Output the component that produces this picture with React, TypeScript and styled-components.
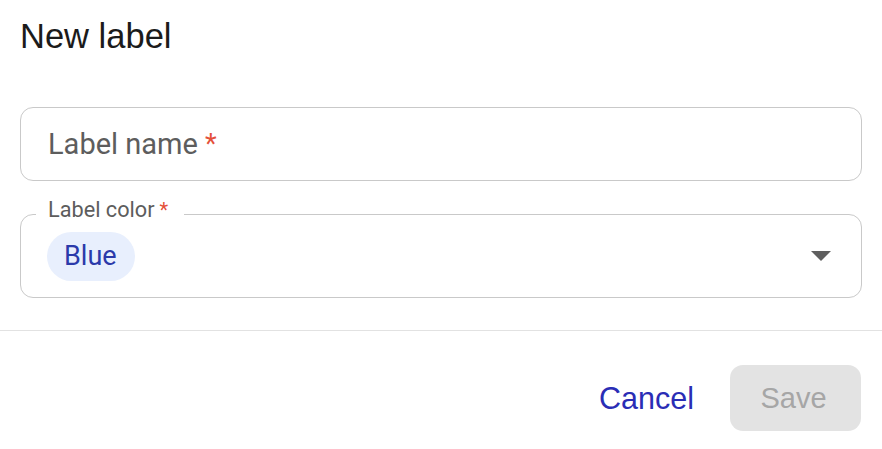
import React from "react";
import styled, { createGlobalStyle } from "styled-components";

const Global = createGlobalStyle`
  html, body { margin: 0; padding: 0; background: #ffffff; }
  body { font-family: "Liberation Sans", Arial, sans-serif; }
  * { box-sizing: border-box; }
`;

const Dialog = styled.div`
  width: 882px;
  height: 449px;
  display: flex;
  flex-direction: column;
  background: #ffffff;
`;

const Title = styled.h1`
  margin: 0;
  padding: 16px 20px 0;
  font-family: "Liberation Sans", Arial, sans-serif;
  font-weight: 400;
  font-size: 34.5px;
  line-height: 40px;
  color: #1b1b1b;
`;

const Body = styled.div`
  display: flex;
  flex-direction: column;
  gap: 33px;
  padding: 51px 20px 32px;
  border-bottom: 1px solid #e2e2e2;
`;

const TextField = styled.div`
  height: 74px;
  border: 1.5px solid #c9c9c9;
  border-radius: 13px;
  display: flex;
  align-items: center;
  padding: 0 27px;
  font-family: Roboto, "Noto Sans", sans-serif;
  font-size: 29px;
  color: #5d5d5d;
`;

const Required = styled.span<{ $small?: boolean }>`
  color: #e4503a;
  margin-left: ${(p) => (p.$small ? "5px" : "7px")};
  font-size: ${(p) => (p.$small ? "20px" : "27px")};
`;

const SelectField = styled.div`
  position: relative;
  height: 84px;
  border: 1.5px solid #c9c9c9;
  border-radius: 13px;
  padding: 0 30px 0 26px;
  display: flex;
  align-items: center;
  justify-content: space-between;
`;

const Legend = styled.span`
  position: absolute;
  top: -16px;
  left: 15px;
  padding: 0 16px 0 12px;
  background: #ffffff;
  font-family: Roboto, "Noto Sans", sans-serif;
  font-size: 21.7px;
  line-height: 22px;
  color: #5d5d5d;
`;

const Chip = styled.span`
  display: inline-flex;
  align-items: center;
  height: 49px;
  padding: 0 18px 0 17px;
  border-radius: 25px;
  background: #e8effd;
  color: #2b3aaa;
  font-family: Roboto, "Noto Sans", sans-serif;
  font-size: 27px;
`;

const Arrow = styled.svg`
  width: 20px;
  height: 10px;
`;

const Footer = styled.div`
  flex: 1;
  display: flex;
  justify-content: flex-end;
  align-items: flex-start;
  gap: 36px;
  padding: 34px 21px 0 0;
`;

const TextButton = styled.button`
  border: none;
  background: transparent;
  padding: 0;
  height: 66px;
  font-family: "Liberation Sans", Arial, sans-serif;
  font-size: 30.5px;
  color: #2a2db5;
  cursor: pointer;
`;

const FilledButton = styled.button`
  border: none;
  width: 131px;
  height: 66px;
  padding: 0 4px 0 0;
  border-radius: 13px;
  background: #e3e3e3;
  font-family: "Liberation Sans", Arial, sans-serif;
  font-size: 29px;
  color: #a6a6a6;
`;

export default function App() {
  return (
    <>
      <Global />
      <Dialog>
        <Title>New label</Title>
        <Body>
          <TextField>
            Label name<Required>*</Required>
          </TextField>
          <SelectField>
            <Legend>
              Label color<Required $small>*</Required>
            </Legend>
            <Chip>Blue</Chip>
            <Arrow viewBox="0 0 20 10">
              <path d="M0 0 L20 0 L10 10 Z" fill="#5f5f5f" />
            </Arrow>
          </SelectField>
        </Body>
        <Footer>
          <TextButton>Cancel</TextButton>
          <FilledButton disabled>Save</FilledButton>
        </Footer>
      </Dialog>
    </>
  );
}
